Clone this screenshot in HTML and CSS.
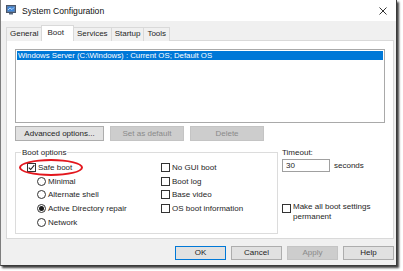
FILE: index.html
```html
<!DOCTYPE html>
<html>
<head>
<meta charset="utf-8">
<link rel="stylesheet" href="styles.css">
</head>
<body>
<div class="window">
  <div class="titlebar">
    <svg class="app-icon" width="10" height="10" viewBox="0 0 10 10">
      <rect x="0.5" y="0.5" width="9" height="7" fill="#6d7b8f" stroke="#4a5568"/>
      <rect x="1.5" y="1.5" width="7" height="5" fill="#3f86d9"/>
      <path d="M2 5 L4 3 L6 4.5 L8 2.5" stroke="#d8ecff" stroke-width="0.8" fill="none"/>
      <rect x="3" y="8" width="4" height="1.5" fill="#5a6a80"/>
    </svg>
    <span class="title">System Configuration</span>
    <svg class="close" width="8" height="8" viewBox="0 0 8 8">
      <path d="M0.5 0.5 L7.5 7.5 M7.5 0.5 L0.5 7.5" stroke="#333" stroke-width="1"/>
    </svg>
  </div>
  <div class="client">
    <div class="tabs">
      <div class="tab">General</div>
      <div class="tab selected">Boot</div>
      <div class="tab">Services</div>
      <div class="tab">Startup</div>
      <div class="tab">Tools</div>
    </div>
    <div class="panel">
      <div class="listbox">
        <div class="list-item">Windows Server (C:\Windows) : Current OS; Default OS</div>
      </div>
      <div class="btn-row">
        <div class="btn adv">Advanced options...</div>
        <div class="btn disabled mid">Set as default</div>
        <div class="btn disabled mid">Delete</div>
      </div>
      <div class="boot-area">
        <div class="group">
          <div class="group-title">Boot options</div>
          <div class="group-cols">
            <div class="col-left">
              <div class="row safe">
                <span class="chk checked">
                  <svg width="7" height="7" viewBox="0 0 7 7"><path d="M0.8 3.6 L2.7 5.5 L6.3 1.2" stroke="#222" stroke-width="1.1" fill="none"/></svg>
                </span>
                <span>Safe boot</span>
                <span class="ring"></span>
              </div>
              <div class="row indent"><span class="radio"></span><span>Minimal</span></div>
              <div class="row indent"><span class="radio"></span><span>Alternate shell</span></div>
              <div class="row indent"><span class="radio on"><span class="dot"></span></span><span>Active Directory repair</span></div>
              <div class="row indent"><span class="radio"></span><span>Network</span></div>
            </div>
            <div class="col-right">
              <div class="row"><span class="chk"></span><span>No GUI boot</span></div>
              <div class="row"><span class="chk"></span><span>Boot log</span></div>
              <div class="row"><span class="chk"></span><span>Base video</span></div>
              <div class="row"><span class="chk"></span><span>OS boot information</span></div>
            </div>
          </div>
        </div>
        <div class="side">
          <div class="label">Timeout:</div>
          <div class="timeout-row">
            <div class="textbox">30</div>
            <span>seconds</span>
          </div>
          <div class="perm">
            <span class="chk"></span>
            <span class="perm-text">Make all boot settings<br>permanent</span>
          </div>
        </div>
      </div>
    </div>
    <div class="footer">
      <div class="btn foot default">OK</div>
      <div class="btn foot">Cancel</div>
      <div class="btn foot disabled">Apply</div>
      <div class="btn foot">Help</div>
    </div>
  </div>
</div>
</body>
</html>
```

FILE: styles.css
```css
* { box-sizing: border-box; }
html, body { margin: 0; padding: 0; background: #fff; }
body {
  font-family: "Liberation Sans", Arial, sans-serif;
  font-size: 8px;
  color: #1e1e1e;
  width: 403px;
  height: 271px;
  overflow: hidden;
}
.window {
  width: 397px;
  height: 266px;
  border: 1px solid #7d7d7d;
  border-top: none;
  border-right-color: #3a3a3a;
  border-bottom-color: #3a3a3a;
  box-shadow: 2px 2px 2px rgba(0,0,0,0.75);
  display: flex;
  flex-direction: column;
  background: #f0f0f0;
}
.titlebar {
  height: 21px;
  background: #fff;
  display: flex;
  align-items: center;
  padding: 0 5px 0 5px;
  flex: none;
}
.app-icon { margin-right: 6px; margin-top: -1px; }
.title { font-size: 8.6px; color: #111; flex: 1; }
.close { margin-right: 4px; }
.client {
  flex: 1;
  padding: 4px 2px 0 5px;
  display: flex;
  flex-direction: column;
}
.tabs {
  display: flex;
  align-items: flex-end;
  height: 16px;
  margin-bottom: -1px;
  position: relative;
  z-index: 1;
}
.tab {
  height: 14px;
  line-height: 12px;
  padding: 0 3px;
  border: 1px solid #d9d9d9;
  border-bottom: none;
  margin-right: -1px;
  background: #f0f0f0;
  white-space: nowrap;
}
.tab.selected {
  height: 16px;
  line-height: 13px;
  padding: 0 9px 0 5px;
  background: #fff;
}
.panel {
  width: 388px;
  height: 199px;
  border: 1px solid #d9d9d9;
  background: #fff;
  padding: 8px 0 0 8px;
  display: flex;
  flex-direction: column;
}
.listbox {
  width: 370px;
  height: 74px;
  border: 1px solid #a9a9a9;
  padding: 1px;
}
.list-item {
  background: #0078d7;
  color: #fff;
  height: 9px;
  line-height: 9px;
  padding-left: 1px;
  font-size: 7.8px;
}
.btn-row {
  display: flex;
  gap: 6px;
  margin-top: 3px;
}
.btn {
  height: 15px;
  line-height: 13px;
  text-align: center;
  background: #e1e1e1;
  border: 1px solid #adadad;
  color: #1e1e1e;
}
.btn.adv { width: 89px; }
.btn.mid { width: 74px; }
.btn.disabled {
  background: #cdcdcd;
  border-color: #c4c4c4;
  color: #8a8a8a;
}
.boot-area {
  display: flex;
  gap: 4px;
  margin-top: 7px;
}
.group {
  width: 263px;
  height: 82px;
  margin-top: 4px;
  border: 1px solid #dcdcdc;
}
.group-title {
  width: max-content;
  margin: -5px 0 0 5px;
  padding: 0 1px;
  background: #fff;
  line-height: 9px;
}
.group-cols {
  display: grid;
  grid-template-columns: 145px 1fr;
  margin-top: 4px;
}
.col-left { padding-left: 11px; }
.row {
  height: 13.6px;
  display: flex;
  align-items: center;
  gap: 2px;
  position: relative;
}
.row.indent { padding-left: 10px; }
.chk {
  width: 9px;
  height: 9px;
  border: 1px solid #333;
  background: #fff;
  display: flex;
  align-items: center;
  justify-content: center;
  flex: none;
}
.radio {
  width: 9px;
  height: 9px;
  border: 1px solid #333;
  border-radius: 50%;
  background: #fff;
  display: flex;
  align-items: center;
  justify-content: center;
  flex: none;
}
.dot {
  width: 5px;
  height: 5px;
  border-radius: 50%;
  background: #1a1a1a;
}
.ring {
  position: absolute;
  left: -8px;
  top: -2px;
  width: 64px;
  height: 17px;
  border: 2px solid #e3161d;
  border-radius: 50%;
}
.side {
  display: flex;
  flex-direction: column;
  width: 102px;
}
.label { line-height: 9px; height: 9px; }
.timeout-row {
  display: flex;
  align-items: center;
  gap: 4px;
  margin-top: 2px;
}
.textbox {
  width: 48px;
  height: 13px;
  border: 1px solid #a0a0a0;
  line-height: 11px;
  padding-left: 3px;
}
.perm {
  display: flex;
  align-items: flex-start;
  gap: 2px;
  margin-top: 30px;
}
.perm .chk { margin-top: 2px; }
.perm-text { line-height: 10px; }
.footer {
  display: flex;
  justify-content: flex-end;
  gap: 5px;
  margin-top: 7px;
  width: 388px;
}
.btn.foot { width: 51px; height: 14px; line-height: 12px; }
.btn.default { border-color: #0078d7; }
```
